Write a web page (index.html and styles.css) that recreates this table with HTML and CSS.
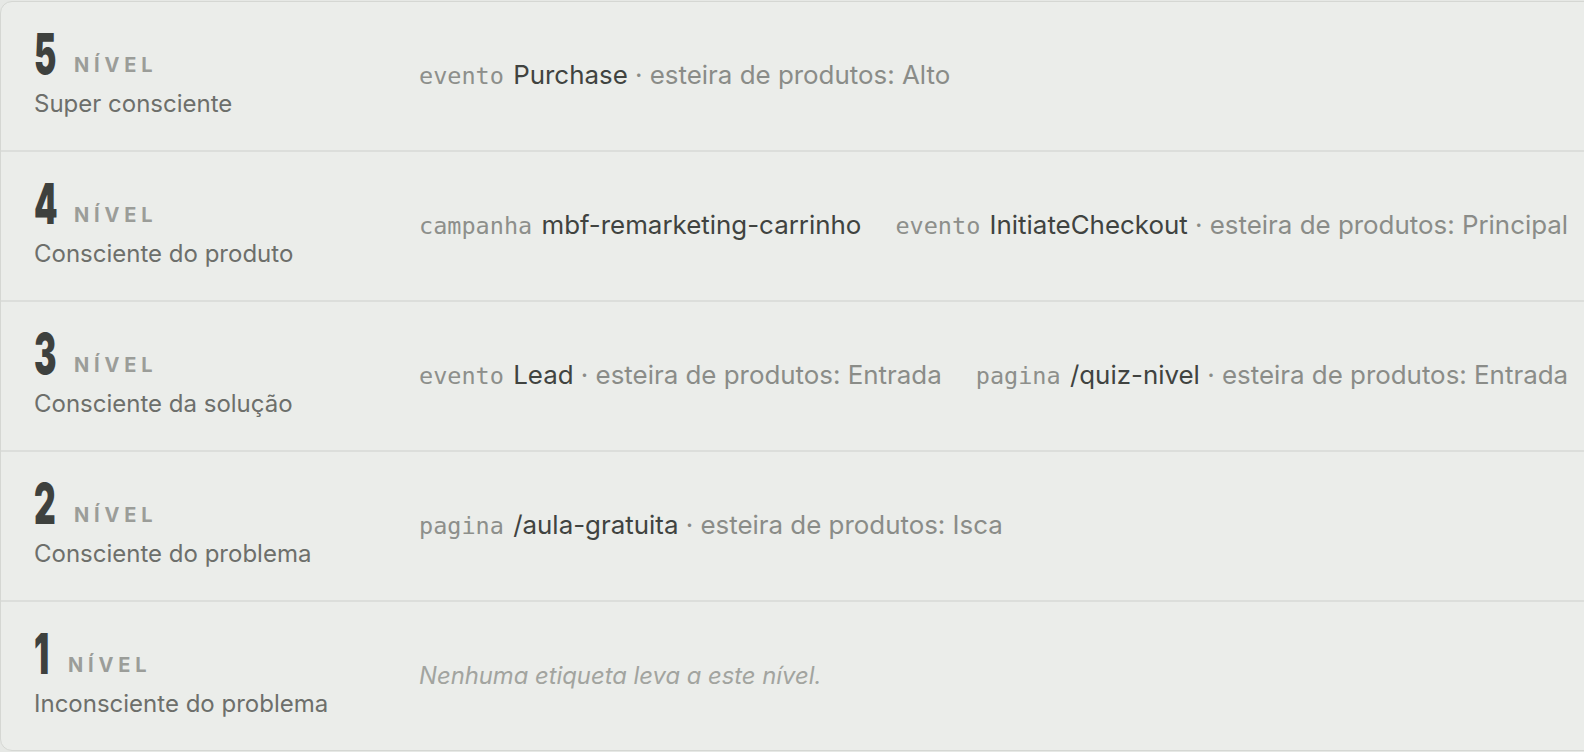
FILE: index.html
```html
<!DOCTYPE html>
<html lang="pt-BR">
<head>
<meta charset="utf-8">
<title>Níveis de consciência</title>
<link rel="stylesheet" href="styles.css">
</head>
<body>
<section class="levels">
  <div class="row">
    <div class="level">
      <div class="level-head"><span class="num"><span class="num-glyph">5</span></span><span class="kicker">NÍVEL</span></div>
      <div class="level-name">Super consciente</div>
    </div>
    <div class="tags">
      <span class="tag"><code class="kind">evento</code> <span class="val">Purchase</span> · esteira de produtos: Alto</span>
    </div>
  </div>
  <div class="row">
    <div class="level">
      <div class="level-head"><span class="num"><span class="num-glyph">4</span></span><span class="kicker">NÍVEL</span></div>
      <div class="level-name">Consciente do produto</div>
    </div>
    <div class="tags">
      <span class="tag"><code class="kind">campanha</code> <span class="val">mbf-remarketing-carrinho</span></span>
      <span class="tag"><code class="kind">evento</code> <span class="val">InitiateCheckout</span> · esteira de produtos: Principal</span>
    </div>
  </div>
  <div class="row">
    <div class="level">
      <div class="level-head"><span class="num"><span class="num-glyph">3</span></span><span class="kicker">NÍVEL</span></div>
      <div class="level-name">Consciente da solução</div>
    </div>
    <div class="tags">
      <span class="tag"><code class="kind">evento</code> <span class="val">Lead</span> · esteira de produtos: Entrada</span>
      <span class="tag"><code class="kind">pagina</code> <span class="val">/quiz-nivel</span> · esteira de produtos: Entrada</span>
    </div>
  </div>
  <div class="row">
    <div class="level">
      <div class="level-head"><span class="num"><span class="num-glyph">2</span></span><span class="kicker">NÍVEL</span></div>
      <div class="level-name">Consciente do problema</div>
    </div>
    <div class="tags">
      <span class="tag"><code class="kind">pagina</code> <span class="val">/aula-gratuita</span> · esteira de produtos: Isca</span>
    </div>
  </div>
  <div class="row">
    <div class="level">
      <div class="level-head"><span class="num num-narrow"><span class="num-glyph">1</span></span><span class="kicker">NÍVEL</span></div>
      <div class="level-name">Inconsciente do problema</div>
    </div>
    <div class="tags">
      <span class="empty">Nenhuma etiqueta leva a este nível.</span>
    </div>
  </div>
</section>
</body>
</html>
```

FILE: styles.css
```css
html, body {
  margin: 0;
  padding: 0;
  background: #e6e8e5;
  overflow: hidden;
}

body {
  font-family: Inter, "Noto Sans", sans-serif;
  width: 1584px;
  height: 752px;
  padding-top: 1px;
  box-sizing: border-box;
}

.levels {
  width: 1620px;
  height: 750px;
  box-sizing: border-box;
  border: 1px solid #d5d7d3;
  border-radius: 12px;
  background: #ebedea;
  display: flex;
  flex-direction: column;
  overflow: hidden;
}

.row {
  height: 150px;
  flex: none;
  box-sizing: border-box;
  display: grid;
  grid-template-columns: 385px 1fr;
  align-items: center;
  padding-left: 33px;
  border-bottom: 2px solid #dcdedb;
}

.row:last-child {
  border-bottom: none;
  height: 148px;
}

.level {
  padding-bottom: 7px;
}

.level-head {
  display: flex;
  align-items: flex-end;
  height: 56px;
}

.num {
  display: inline-block;
  width: 22px;
  margin-right: 18px;
  font-size: 56px;
  line-height: 56px;
  font-weight: 900;
  color: #3e413e;
}

.num-narrow {
  width: 18px;
  margin-right: 16px;
}

.num-glyph {
  display: inline-block;
  transform: scaleX(0.6);
  transform-origin: 0 50%;
}

.kicker {
  font-size: 20px;
  line-height: 20px;
  margin-bottom: 7px;
  font-weight: 700;
  letter-spacing: 0.24em;
  color: #9b9d99;
}

.level-name {
  margin-top: 6px;
  font-size: 24px;
  line-height: 32px;
  color: #6d6f6b;
}

.tags {
  display: flex;
  gap: 34px;
  white-space: nowrap;
  font-size: 25.9px;
  line-height: 32px;
  color: #8a8c88;
  padding-bottom: 1px;
}

.kind {
  font-family: "DejaVu Sans Mono", "Liberation Mono", monospace;
  font-size: 23.5px;
  color: #8d8f8b;
  margin-right: 2px;
}

.val {
  color: #404340;
}

.empty {
  font-style: italic;
  font-size: 23.8px;
  color: #a2a49f;
}
```
